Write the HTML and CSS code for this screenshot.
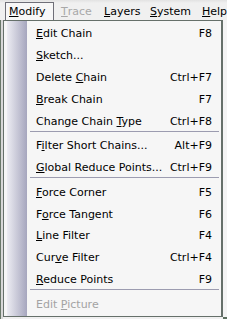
FILE: index.html
```html
<!DOCTYPE html>
<html lang="en">
  <head>
    <meta charset="UTF-8" />
    <title>Modify menu</title>
    <link rel="stylesheet" href="styles.css">
  </head>
  <body>
    <!-- Menu bar -->
    <div class="menubar">
      <span class="top-item open modify"><u>M</u>odify</span>
      <span class="top-item disabled trace"><u>T</u>race</span>
      <span class="top-item layers"><u>L</u>ayers</span>
      <span class="top-item system"><u>S</u>ystem</span>
      <span class="top-item"><u>H</u>elp</span>
    </div>
    <div class="stage">
      <div class="gutter"></div>
      <!-- Dropdown -->
      <div class="menu">
        <div class="item"><span><u>E</u>dit Chain</span><span>F8</span></div>
        <div class="item"><span><u>S</u>ketch...</span><span></span></div>
        <div class="item"><span>Delete <u>C</u>hain</span><span>Ctrl+F7</span></div>
        <div class="item"><span><u>B</u>reak Chain</span><span>F7</span></div>
        <div class="item"><span>Change Chain <u>T</u>ype</span><span>Ctrl+F8</span></div>
        <div class="sep"></div>
        <div class="item"><span>F<u>i</u>lter Short Chains...</span><span>Alt+F9</span></div>
        <div class="item"><span><u>G</u>lobal Reduce Points...</span><span>Ctrl+F9</span></div>
        <div class="sep"></div>
        <div class="item"><span><u>F</u>orce Corner</span><span>F5</span></div>
        <div class="item"><span>F<u>o</u>rce Tangent</span><span>F6</span></div>
        <div class="item"><span><u>L</u>ine Filter</span><span>F4</span></div>
        <div class="item"><span>Cur<u>v</u>e Filter</span><span>Ctrl+F4</span></div>
        <div class="item"><span><u>R</u>educe Points</span><span>F9</span></div>
        <div class="sep"></div>
        <div class="item disabled"><span>Edit <u>P</u>icture</span><span></span></div>
      </div>
      <div class="rest"></div>
    </div>
  </body>
</html>
```

FILE: styles.css
```css
body {
  margin: 0;
  width: 227px;
  height: 319px;
  overflow: hidden;
  background-color: #f0f0f0;
  font-family: Tahoma, "DejaVu Sans", sans-serif;
  font-size: 11px;
  color: #000;
}
u {
  text-decoration: underline;
  text-underline-offset: 1px;
}
/* Menu bar */
.menubar {
  display: flex;
  height: 20px;
  background: linear-gradient(#e2e2e2, #f0f0f0 3px);
  padding-left: 5px;
  box-sizing: border-box;
  white-space: nowrap;
  overflow: hidden;
}
.top-item {
  display: flex;
  align-items: center;
  flex: none;
  padding: 0 0 0 3px;
  margin-top: 2px;
  font-size: 11px;
  border: 1px solid transparent;
  border-bottom: none;
}
.top-item.modify { width: 44px; margin-right: 3px; }
.top-item.trace { width: 38px; }
.top-item.layers { width: 41px; }
.top-item.system { width: 47px; }
.top-item.open {
  border-color: #6f6f78;
  background-color: #f7f7f7;
}
.top-item.disabled {
  color: #a8a8a8;
}
/* Area below the bar */
.stage {
  display: flex;
  height: 299px;
}
.gutter {
  width: 3px;
  background: #d8d8d8;
  border-left: 1px solid #6a786a;
  box-sizing: border-box;
}
.rest {
  flex: 1;
  background: #f4f4f4;
  border-bottom: 2px solid #5d7060;
}
/* Dropdown */
.menu {
  width: 220px;
  height: 297px;
  box-sizing: border-box;
  border: 1px solid #66706a;
  border-right-width: 2px;
  padding: 1px 0;
  background:
    linear-gradient(to right, #ececf2, #a6a6be) 3px 0 / 20px 100% no-repeat,
    #f6f6f6;
  display: flex;
  flex-direction: column;
}
.item {
  display: flex;
  justify-content: space-between;
  align-items: center;
  gap: 6px;
  height: 22px;
  padding: 0 9px 0 32px;
  font-size: 11px;
  white-space: nowrap;
}
.item:first-child {
  margin-top: 1px;
}
.item.disabled {
  color: #a3a3a3;
}
.sep {
  height: 3px;
  margin-left: 26px;
  margin-right: 2px;
  border-top: 1px solid #9c9cb0;
  box-sizing: border-box;
  margin-top: -1px;
  margin-bottom: 1px;
}
```
